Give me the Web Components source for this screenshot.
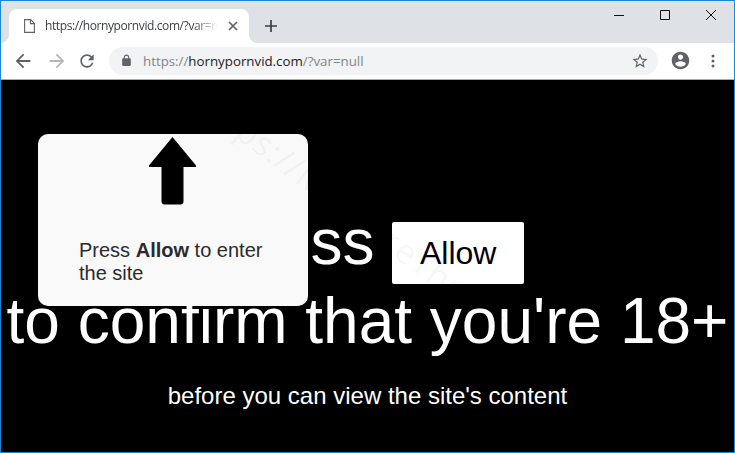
<!DOCTYPE html>
<html>
<head>
<meta charset="utf-8">
<title>hornypornvid.com</title>
<style>
  html, body { margin: 0; height: 100%; background: #000; }
</style>
</head>
<body>
<browser-window>
  <browser-titlebar url="https://hornypornvid.com/?var=null"></browser-titlebar>
  <browser-toolbar></browser-toolbar>
  <adult-page>
    <allow-popup slot="overlay">Press <b>Allow</b> to enter the site</allow-popup>
    <page-watermark slot="overlay">https://MalwareThreats.com</page-watermark>
  </adult-page>
</browser-window>

<script>
class BrowserWindow extends HTMLElement {
  constructor() {
    super();
    this.attachShadow({ mode: "open" });
    this.shadowRoot.innerHTML = `
      <style>
        :host {
          display: flex; flex-direction: column; box-sizing: border-box;
          width: 735px; height: 453px; overflow: hidden;
          border: 1px solid #1a87dc; background: #000;
        }
      </style>
      <slot></slot>`;
  }
}

class BrowserTitlebar extends HTMLElement {
  constructor() {
    super();
    this.attachShadow({ mode: "open" });
    const url = this.getAttribute("url") || "";
    this.shadowRoot.innerHTML = `
      <style>
        :host {
          display: flex; height: 42px; flex: none; align-items: flex-end;
          background: #dee1e6; padding-left: 8px;
          font: 12px "Open Sans", sans-serif; color: #3c4043;
        }
        .tab {
          position: relative; box-sizing: border-box; width: 240px; height: 34px;
          display: flex; align-items: center; padding: 0 11px 1px 15px; gap: 10px;
          background: #fff; border-radius: 8px 8px 0 0;
        }
        .tab::before, .tab::after {
          content: ""; position: absolute; bottom: 0; width: 8px; height: 8px;
        }
        .tab::before { left: -8px; background: radial-gradient(circle at 0 0, transparent 7.5px, #fff 8px); }
        .tab::after { right: -8px; background: radial-gradient(circle at 100% 0, transparent 7.5px, #fff 8px); }
        .title {
          flex: 1; min-width: 0; white-space: nowrap; overflow: hidden; letter-spacing: -.4px;
          -webkit-mask-image: linear-gradient(to right, #000 86%, transparent 100%);
          mask-image: linear-gradient(to right, #000 86%, transparent 100%);
        }
        svg { display: block; flex: none; }
        .plus { margin: 0 0 11px 16px; }
        .spacer { flex: 1; }
        .controls { display: flex; align-self: flex-start; margin: 9px 18px 0 0; gap: 36px; }
      </style>
      <div class="tab">
        <svg width="11" height="14" viewBox="0 0 11 14" fill="none" stroke="#5f6368" stroke-width="1.1">
          <path d="M.6.6h6l3.8 3.8v9H.6z"/><path d="M6.4.6v4h4"/>
        </svg>
        <span class="title">${url}</span>
        <svg width="10" height="10" viewBox="0 0 10 10" stroke="#5f6368" stroke-width="1.7">
          <path d="M1 1l8 8M9 1L1 9"/>
        </svg>
      </div>
      <svg class="plus" width="12" height="12" viewBox="0 0 12 12" stroke="#3c4043" stroke-width="1.7">
        <path d="M6 0v12M0 6h12"/>
      </svg>
      <div class="spacer"></div>
      <div class="controls">
        <svg width="10" height="10" viewBox="0 0 10 10" stroke="#111" stroke-width="1"><path d="M0 5.5h10"/></svg>
        <svg width="10" height="10" viewBox="0 0 10 10" fill="none" stroke="#111" stroke-width="1"><path d="M.5.5h9v9h-9z"/></svg>
        <svg width="10" height="10" viewBox="0 0 10 10" stroke="#111" stroke-width="1"><path d="M0 0l10 10M10 0L0 10"/></svg>
      </div>`;
  }
}

class BrowserToolbar extends HTMLElement {
  constructor() {
    super();
    this.attachShadow({ mode: "open" });
    this.shadowRoot.innerHTML = `
      <style>
        :host {
          display: flex; flex: none; align-items: center; box-sizing: border-box;
          height: 37px; padding: 0 0 1px 11px; background: #fff;
          border-bottom: 1px solid #a9abad;
          font: 13.3px "Open Sans", sans-serif;
        }
        svg { display: block; flex: none; }
        .nav { display: flex; align-items: center; gap: 12px; margin-right: 12px; }
        .nav svg:last-child { margin-left: -3px; }
        .omnibox {
          flex: 1; height: 28px; display: flex; align-items: center; box-sizing: border-box;
          padding: 0 9px 0 11px; background: #f1f3f4; border-radius: 14px; color: #80868b;
        }
        .url { flex: 1; margin-left: 10px; white-space: nowrap; }
        .url b { font-weight: 400; color: #202124; }
        .avatar { margin: 0 0 0 12px; }
        .kebab { margin: 0 19px 0 20px; }
      </style>
      <div class="nav">
        <svg width="22" height="22" viewBox="0 0 24 24" fill="#5f6368"><path d="M20 11H7.830l5.590-5.590L12 4l-8 8 8 8 1.410-1.410L7.830 13H20v-2z"/></svg>
        <svg width="22" height="22" viewBox="0 0 24 24" fill="#b4b7ba"><path d="M4 11h12.170l-5.590-5.590L12 4l8 8-8 8-1.410-1.410L16.170 13H4v-2z"/></svg>
        <svg width="20" height="20" viewBox="0 0 24 24" fill="#5f6368"><path d="M17.65 6.35C16.2 4.9 14.21 4 12 4c-4.42 0-7.99 3.58-7.99 8s3.57 8 7.99 8c3.73 0 6.84-2.55 7.73-6h-2.08c-.82 2.33-3.04 4-5.65 4-3.31 0-6-2.69-6-6s2.69-6 6-6c1.66 0 3.14.69 4.22 1.78L13 11h7V4l-2.35 2.35z"/></svg>
      </div>
      <div class="omnibox">
        <svg width="13" height="13" viewBox="0 0 24 24" fill="#5f6368"><path d="M18 8h-1V6c0-2.76-2.24-5-5-5S7 3.24 7 6v2H6c-1.1 0-2 .9-2 2v10c0 1.1.9 2 2 2h12c1.1 0 2-.9 2-2V10c0-1.1-.9-2-2-2zM9 6c0-1.66 1.34-3 3-3s3 1.34 3 3v2H9V6z"/></svg>
        <span class="url">https://<b>hornypornvid.com</b>/?var=null</span>
        <svg width="18" height="18" viewBox="0 0 24 24" fill="#5f6368"><path d="M22 9.24l-7.19-.62L12 2 9.19 8.63 2 9.24l5.46 4.73L5.82 21 12 17.27 18.18 21l-1.63-7.03L22 9.24zM12 15.4l-3.76 2.27 1-4.28-3.32-2.88 4.38-.38L12 6.1l1.71 4.04 4.38.38-3.32 2.88 1 4.28L12 15.4z"/></svg>
      </div>
      <svg class="avatar" width="21" height="21" viewBox="0 0 24 24" fill="#5f6368"><path d="M12 2C6.48 2 2 6.48 2 12s4.48 10 10 10 10-4.48 10-10S17.52 2 12 2zm0 3c1.66 0 3 1.34 3 3s-1.34 3-3 3-3-1.34-3-3 1.34-3 3-3zm0 14.2c-2.5 0-4.71-1.28-6-3.22.03-1.99 4-3.08 6-3.08 1.99 0 5.97 1.09 6 3.08-1.29 1.94-3.5 3.22-6 3.22z"/></svg>
      <svg class="kebab" width="4" height="14" viewBox="0 0 4 14" fill="#5f6368"><circle cx="2" cy="2" r="1.5"/><circle cx="2" cy="7" r="1.5"/><circle cx="2" cy="12" r="1.5"/></svg>`;
  }
}

class AllowButton extends HTMLElement {
  constructor() {
    super();
    this.attachShadow({ mode: "open" });
    this.shadowRoot.innerHTML = `
      <style>
        :host {
          display: inline-flex; align-items: center; justify-content: center; box-sizing: border-box;
          width: 132px; height: 62px;
          background: #fff; border-radius: 2px; color: #000;
          font-size: 32px; vertical-align: baseline;
        }
      </style>
      <slot></slot>`;
  }
}

class AdultPage extends HTMLElement {
  constructor() {
    super();
    this.attachShadow({ mode: "open" });
    this.shadowRoot.innerHTML = `
      <style>
        :host {
          display: block; flex: 1; position: relative; overflow: hidden;
          background: #000; color: #fff; text-align: center;
          font-family: "Liberation Sans", Arial, sans-serif;
        }
        .press { margin: 0; padding-top: 127px; font-size: 64px; line-height: 70px; height: 70px; white-space: nowrap; }
        .confirm { margin: 0; padding-top: 9px; font-size: 64px; line-height: 70px; white-space: nowrap; }
        .note { margin: 0; padding-top: 26px; font-size: 24px; line-height: 28px; }
      </style>
      <p class="press">Press <allow-button>Allow</allow-button></p>
      <p class="confirm">to confirm that you're 18+</p>
      <p class="note">before you can view the site's content</p>
      <slot name="overlay"></slot>`;
  }
}

class AllowPopup extends HTMLElement {
  constructor() {
    super();
    this.attachShadow({ mode: "open" });
    this.shadowRoot.innerHTML = `
      <style>
        :host {
          position: absolute; left: 37px; top: 54px; box-sizing: border-box;
          width: 270px; height: 172px; padding: 3px 41px 0;
          background: #f9f9f9; border-radius: 10px; color: #2b2b2b;
          font: 20px/23px "Liberation Sans", Arial, sans-serif; text-align: left;
        }
        svg { display: block; margin: 0 0 34px 70px; }
      </style>
      <svg width="48" height="68" viewBox="0 0 48 68">
        <path d="M23.500 0L47 28.500V30H34.500V64c0 2-1 3.500-3 3.500H15.500c-2 0-3-1.500-3-3.500V30H0v-1.500z" fill="#000"/>
      </svg>
      <slot></slot>`;
  }
}

class PageWatermark extends HTMLElement {
  constructor() {
    super();
    this.attachShadow({ mode: "open" });
    this.shadowRoot.innerHTML = `
      <style>
        :host {
          position: absolute; left: 215px; top: -2px; pointer-events: none; white-space: nowrap;
          transform: rotate(37deg); transform-origin: 0 0;
          font: 34px "Open Sans", sans-serif; letter-spacing: 1px; color: rgba(0,0,0,.05);
        }
      </style>
      <slot></slot>`;
  }
}

customElements.define("browser-window", BrowserWindow);
customElements.define("browser-titlebar", BrowserTitlebar);
customElements.define("browser-toolbar", BrowserToolbar);
customElements.define("allow-button", AllowButton);
customElements.define("adult-page", AdultPage);
customElements.define("allow-popup", AllowPopup);
customElements.define("page-watermark", PageWatermark);
</script>
</body>
</html>
